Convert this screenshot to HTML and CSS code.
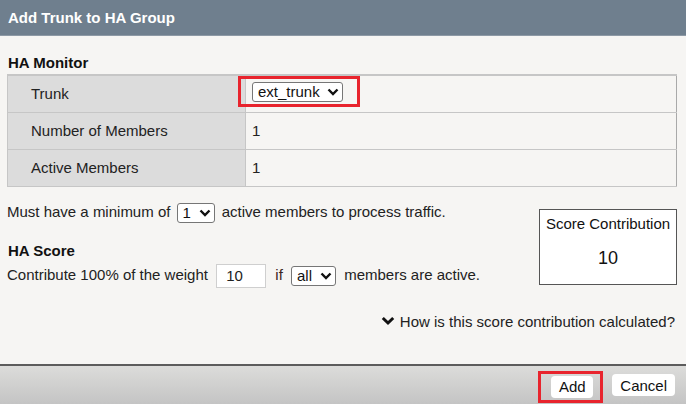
FILE: index.html
```html
<!DOCTYPE html>
<html>
<head>
<meta charset="utf-8">
<link rel="stylesheet" href="styles.css">
</head>
<body>
<div class="dialog">
  <div class="header">Add Trunk to HA Group</div>
  <div class="content">
    <div class="section-title">HA Monitor</div>
    <table class="grid">
      <tr>
        <td class="label">Trunk</td>
        <td class="value">
          <span class="hl hl-trunk">
            <span class="select sel-trunk">ext_trunk<svg class="chev" width="12" height="8" viewBox="0 0 12 8"><path d="M1.5 1.5 L6 6 L10.5 1.5" fill="none" stroke="#111" stroke-width="2.4"/></svg></span>
          </span>
        </td>
      </tr>
      <tr>
        <td class="label">Number of Members</td>
        <td class="value">1</td>
      </tr>
      <tr>
        <td class="label">Active Members</td>
        <td class="value">1</td>
      </tr>
    </table>
    <div class="lower">
      <div class="lower-left">
        <div class="line line-min">Must have a minimum of <span class="select sel-min">1<svg class="chev" width="12" height="8" viewBox="0 0 12 8"><path d="M1.5 1.5 L6 6 L10.5 1.5" fill="none" stroke="#111" stroke-width="2.4"/></svg></span> active members to process traffic.</div>
        <div class="section-title score-title">HA Score</div>
        <div class="line line-weight">Contribute 100% of the weight <span class="input">10</span> <span class="if">if</span> <span class="select sel-all">all<svg class="chev" width="12" height="8" viewBox="0 0 12 8"><path d="M1.5 1.5 L6 6 L10.5 1.5" fill="none" stroke="#111" stroke-width="2.4"/></svg></span> members are active.</div>
      </div>
      <div class="score-box">
        <div class="score-label">Score Contribution</div>
        <div class="score-value">10</div>
      </div>
    </div>
    <div class="how"><svg class="how-chev" width="14" height="10" viewBox="0 0 14 10"><path d="M1.8 2 L7 7 L12.2 2" fill="none" stroke="#111" stroke-width="3"/></svg>How is this score contribution calculated?</div>
  </div>
  <div class="footer">
    <span class="hl hl-add"><span class="btn btn-add">Add</span></span>
    <span class="btn">Cancel</span>
  </div>
</div>
</body>
</html>
```
FILE: styles.css
```css
html, body {
  margin: 0;
  padding: 0;
}
body {
  width: 686px;
  height: 404px;
  overflow: hidden;
  background: #f6f5f3;
  font-family: "Liberation Sans", Arial, sans-serif;
  font-size: 15px;
  color: #222;
}
.dialog {
  display: flex;
  flex-direction: column;
  height: 404px;
}
.header {
  height: 36px;
  line-height: 36px;
  background: #6f7f8e;
  border-bottom: 1px solid #8d99a5;
  color: #fff;
  font-weight: bold;
  font-size: 15px;
  padding-left: 8px;
  box-sizing: border-box;
}
.content {
  flex: 1;
  padding: 18px 9px 0 7px;
}
.section-title {
  font-weight: bold;
  font-size: 15px;
  color: #111;
  line-height: 17px;
  margin-left: 1px;
}
.grid {
  margin-top: 3px;
  width: 670px;
  border-collapse: collapse;
  border: 1px solid #c6c6c6;
  border-right-color: #a9a9a9;
}
.grid td {
  height: 37px;
  padding: 0;
  border-top: 1px solid #c6c6c6;
  box-sizing: border-box;
}
.grid tr:first-child td {
  border-top: 2px solid #c6c6c6;
}
.label {
  width: 238px;
  background: #dcdcdc;
  padding-left: 23px !important;
  border-right: 1px solid #c6c6c6;
  color: #222;
}
.value {
  padding-left: 6px !important;
  color: #222;
}
.hl {
  display: inline-flex;
  align-items: center;
  border: 3px solid #e8242d;
  box-sizing: border-box;
}
.hl-trunk {
  width: 122px;
  height: 31px;
  margin-left: -14px;
  margin-bottom: 4px;
  padding-left: 11px;
}
.select {
  display: inline-flex;
  align-items: center;
  justify-content: space-between;
  background: #fff;
  border: 1px solid #767676;
  border-radius: 3px;
  box-sizing: border-box;
  height: 20px;
  padding: 0 3px 0 5px;
  color: #111;
  vertical-align: middle;
}
.chev {
  display: block;
  margin-left: 6px;
}
.sel-trunk {
  width: 91px;
}
.sel-min {
  width: 38px;
  margin: 0 3px 0 2px;
}
.sel-all {
  width: 45px;
  margin: 0 4px 0 2px;
}
.lower {
  display: flex;
  justify-content: space-between;
  align-items: flex-start;
}
.lower-left {
  padding-top: 13px;
}
.line {
  line-height: 24px;
  white-space: nowrap;
}
.score-title {
  margin-top: 18px;
}
.line-weight {
  margin-top: 4px;
}
.input {
  display: inline-block;
  vertical-align: middle;
  width: 50px;
  height: 24px;
  line-height: 22px;
  box-sizing: border-box;
  border: 1px solid #cfcfcf;
  background: #fff;
  padding-left: 9px;
  margin: 0 3px 0 4px;
}
.if {
  color: #3a2420;
  margin: 0 2px;
}
.score-box {
  margin-top: 22px;
  width: 138px;
  height: 76px;
  box-sizing: border-box;
  border: 1px solid #555;
  background: #fff;
  text-align: center;
  color: #111;
}
.score-label {
  margin-top: 5px;
  line-height: 18px;
}
.score-value {
  margin-top: 15px;
  font-size: 18px;
  line-height: 20px;
}
.how {
  margin-top: 25px;
  text-align: right;
  line-height: 18px;
  padding-right: 2px;
}
.how-chev {
  display: inline-block;
  vertical-align: 1px;
  margin-right: 5px;
}
.footer {
  height: 40px;
  box-sizing: border-box;
  border-top: 2px solid #5c5c5c;
  background: linear-gradient(#dcdcda, #c4c4c4);
  display: flex;
  justify-content: flex-end;
  align-items: center;
  padding-right: 11px;
  gap: 9px;
}
.hl-add {
  height: 32px;
  padding: 0 7px 0 10px;
  margin-top: 3px;
}
.btn {
  display: inline-flex;
  align-items: center;
  justify-content: center;
  height: 22px;
  padding: 0 8px;
  background: #fff;
  border-radius: 4px;
  color: #111;
  box-sizing: border-box;
}
.btn-add {
  width: 42px;
}
```
